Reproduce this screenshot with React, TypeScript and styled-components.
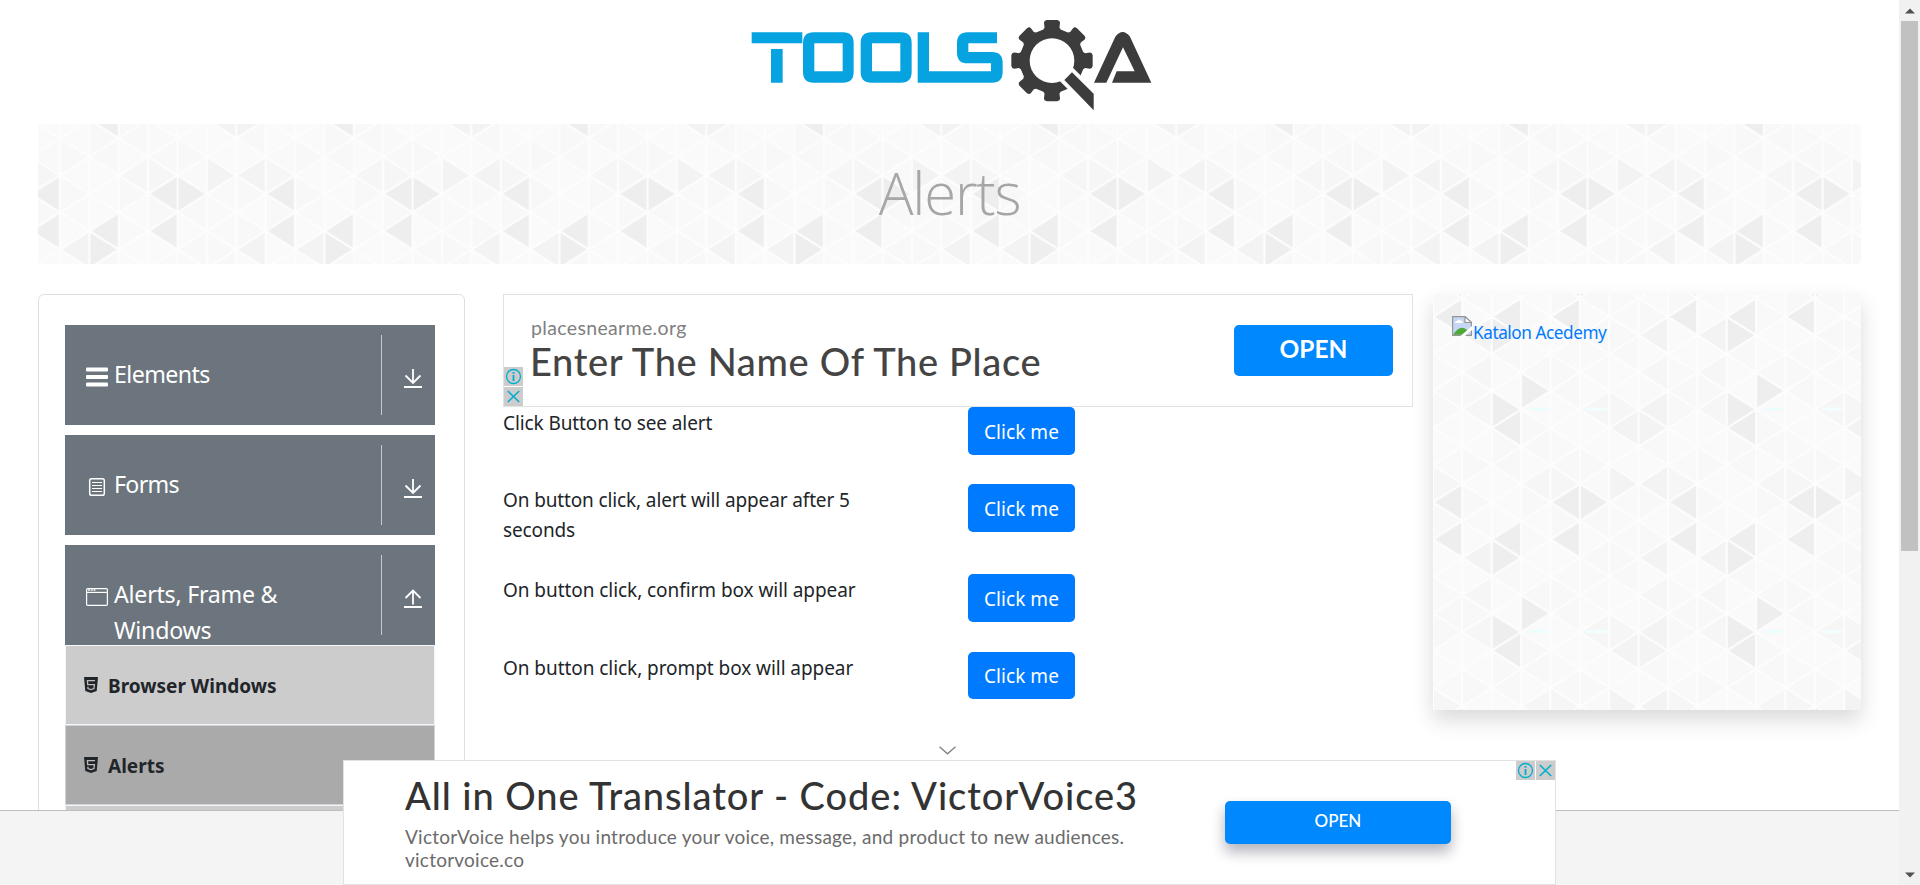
import React from 'react';
import styled, { createGlobalStyle, css } from 'styled-components';

const uiFont = '"Noto Sans", "Open Sans", sans-serif';
const adFont = 'Lato, Inter, sans-serif';

const GlobalStyle = createGlobalStyle`
  *, *::before, *::after { box-sizing: border-box; }
  body { margin: 0; background: #fff; overflow: hidden; }
  svg { display: block; }
`;

const Shell = styled.div`
  position: relative;
  display: flex;
  width: 1920px;
  height: 885px;
  overflow: hidden;
  font-family: ${uiFont};
  font-size: 19px;
  line-height: 30px;
  color: #212529;
`;

const Page = styled.div`
  display: flex;
  flex-direction: column;
  width: 1899px;
`;

const Scroller = styled.div`
  height: 810px;
  overflow: hidden;
  padding: 0 38px;
`;

const Footer = styled.footer`
  flex: 1;
  background: #f4f4f4;
  border-top: 1px solid #bdbdbd;
`;

const Header = styled.header`
  display: flex;
  justify-content: center;
  height: 124px;
`;

const Banner = styled.div`
  position: relative;
  display: flex;
  justify-content: center;
  height: 140px;
  padding-top: 25px;
`;

const BannerTitle = styled.h1`
  position: relative;
  margin: 0;
  font-family: "Open Sans", sans-serif;
  font-weight: 300;
  font-size: 58px;
  line-height: 88px;
  letter-spacing: -1.2px;
  color: #a6a6a6;
`;

const PatternSvg = styled.svg`
  position: absolute;
  inset: 0;
  width: 100%;
  height: 100%;
`;

const Columns = styled.div`
  display: flex;
  align-items: flex-start;
  margin-top: 30px;
`;

const SideCard = styled.nav`
  width: 427px;
  height: 620px;
  padding: 30px 29px 0 26px;
  border: 1px solid #dfdfdf;
  border-radius: 6px;
`;

const Group = styled.div`
  display: flex;
  width: 370px;
  height: 100px;
  margin-bottom: 10px;
  padding: 10px 0;
  background: #6c757d;
  color: #fff;
`;

const GroupLabel = styled.div`
  display: flex;
  gap: 6px;
  width: 317px;
  padding: 21px 0 0 21px;
  border-right: 1px solid #c4c8cb;
  font-size: 23.2px;
  line-height: 36px;
`;

const GroupIcon = styled.span`
  flex: none;
  width: 22px;
  padding-top: 11px;
`;

const GroupText = styled.span<{ $spacing?: number }>`
  width: 200px;
  letter-spacing: ${(p) => p.$spacing ?? 0}px;
`;

const GroupToggle = styled.span`
  padding: 34px 0 0 22px;
`;

const SubMenu = styled.ul`
  list-style: none;
  margin: -10px 0 0;
  padding: 0;
  width: 370px;
`;

const SubItem = styled.li<{ $active?: boolean }>`
  display: flex;
  align-items: center;
  gap: 10px;
  height: 80px;
  padding: 0 0 0 18px;
  border: 1px solid ${(p) => (p.$active ? '#ced4da' : '#f4f6f8')};
  background: ${(p) => (p.$active ? '#aaa' : '#ccc')};
  font-weight: 700;
`;

const SubLabel = styled.span`
  padding-top: 2px;
`;

const Main = styled.main`
  width: 910px;
  margin-left: 38px;
`;

const TopAd = styled.section`
  position: relative;
  display: flex;
  justify-content: space-between;
  height: 113px;
  padding: 30px 19px 0 27px;
  border: 1px solid #e2e2e2;
  font-family: ${adFont};
`;

const AdSite = styled.div`
  margin-top: -10px;
  font-size: 19.5px;
  line-height: 26px;
  letter-spacing: 0.35px;
  color: #808080;
`;

const AdTitle = styled.div`
  margin: -3px 0 0 -1px;
  font-size: 38px;
  line-height: 46px;
  font-weight: 500;
  letter-spacing: 0.67px;
  color: #444;
  white-space: nowrap;
`;

const AdButton = styled.button<{ $large?: boolean }>`
  display: flex;
  justify-content: center;
  border: 0;
  border-radius: 5px;
  background: #08f;
  color: #fff;
  font-family: ${adFont};
  ${(p) =>
    p.$large
      ? css`
          width: 159px;
          height: 51px;
          padding: 7px 0 0;
          font-size: 24.5px;
          line-height: 34px;
          font-weight: 700;
        `
      : css`
          width: 226px;
          height: 43px;
          padding: 8px 0 0;
          font-size: 17px;
          line-height: 24px;
          font-weight: 500;
          box-shadow: 0 8px 14px rgba(20, 20, 50, 0.32);
        `}
`;

const AdBadges = styled.div<{ $column?: boolean }>`
  position: absolute;
  display: flex;
  gap: 1px;
  ${(p) =>
    p.$column
      ? css`
          flex-direction: column;
          left: 0;
          bottom: 0;
        `
      : css`
          top: 0;
          right: 0;
        `}
`;

const Badge = styled.span`
  width: 19px;
  height: 19px;
  background: #ccc;
`;

const Rows = styled.div`
  display: flex;
  flex-direction: column;
  gap: 29.9px;
`;

const Row = styled.div`
  display: flex;
  align-items: flex-start;
`;

const RowLabel = styled.div<{ $spacing: number }>`
  width: 465px;
  margin: 1px 0 -1px;
  padding-right: 90px;
  letter-spacing: ${(p) => p.$spacing}px;
`;

const ClickButton = styled.button`
  width: 107px;
  height: 47.5px;
  padding: 1.6px 0 0;
  border: 0;
  border-radius: 5px;
  background: #007bff;
  color: #fff;
  font: 19px/30px ${uiFont};
  letter-spacing: 0.05px;
`;

const Promo = styled.aside`
  position: relative;
  width: 428px;
  height: 416px;
  margin-left: 20px;
  box-shadow: 0 10px 20px rgba(0, 0, 0, 0.15);
`;

const PromoLink = styled.a`
  position: relative;
  display: flex;
  gap: 1px;
  padding: 22px 0 0 19px;
  color: #007bff;
  font-size: 17.2px;
  line-height: 30px;
  letter-spacing: -0.45px;
`;

const PromoText = styled.span`
  padding-top: 2px;
`;

const BottomAd = styled.section`
  position: absolute;
  left: 343px;
  bottom: 0;
  display: flex;
  width: 1213px;
  height: 125px;
  padding: 9px 0 0 61px;
  border: 1px solid #e2e2e2;
  background: #fff;
  font-family: ${adFont};
`;

const BottomCopy = styled.div`
  width: 820px;
  white-space: nowrap;
`;

const BottomTitle = styled.div`
  margin-bottom: 5px;
  font-size: 38px;
  line-height: 50px;
  font-weight: 500;
  color: #333;
  letter-spacing: 0.94px;
`;

const BottomText = styled.div`
  font-size: 19px;
  line-height: 23px;
  color: #6b6b6b;
  letter-spacing: 0.24px;
`;

const BottomAction = styled.div`
  padding-top: 31px;
`;

const Collapse = styled.span`
  position: absolute;
  left: 939px;
  top: 746px;
`;

const ScrollTrack = styled.div`
  display: flex;
  flex-direction: column;
  align-items: center;
  justify-content: space-between;
  width: 21px;
  background: #f1f1f1;
`;

const ScrollThumb = styled.div`
  width: 17px;
  height: 530px;
  margin-bottom: auto;
  background: #c1c1c1;
`;

const ArrowCell = styled.div`
  display: flex;
  align-items: center;
  justify-content: center;
  width: 21px;
  height: 21px;
`;

const COL = 235 / 8;
const STEP = 222.6 / 12;
const DARK = ['0,1', '2,1', '4,1', '2,2', '3,5', '2,6', '2,7', '0,11', '4,11', '5,11'];
const MID = ['7,2', '1,2', '6,7', '7,7', '7,6', '6,10', '7,10'];
const SOFT = ['1,4', '7,4', '0,10', '3,10', '4,10', '6,6', '5,6', '1,6'];

const toneOf = (c: number, j: number) => {
  const key = `${c},${j}`;
  if (DARK.includes(key)) return '#eeeeee';
  if (MID.includes(key)) return '#f3f3f3';
  if (SOFT.includes(key)) return '#f6f6f6';
  return ['#f8f8f8', '#fafafa', '#f9f9f9', '#f8f8f8', '#fafafa'][(c * 7 + j * 3 + ((c * j) % 4)) % 5];
};

const Triangles = ({ id, x, y }: { id: string; x: number; y: number }) => {
  const shapes: React.ReactNode[] = [];
  for (let c = 0; c < 8; c++) {
    for (let j = -1; j <= 12; j++) {
      const cy = 4.25 + STEP * j;
      const left = (c + j + 12) % 2 === 1;
      const apex = (left ? c : c + 1) * COL;
      const side = (left ? c + 1 : c) * COL;
      shapes.push(
        <polygon
          key={`${c}.${j}`}
          points={`${apex},${cy} ${side},${cy - STEP} ${side},${cy + STEP}`}
          fill={toneOf(c, (j + 12) % 12)}
          stroke="#fdfdfd"
          strokeWidth="2"
        />,
      );
    }
  }
  return (
    <PatternSvg>
      <defs>
        <pattern id={id} width="235" height="222.6" patternUnits="userSpaceOnUse" x={x} y={y}>
          {shapes}
          <ellipse cx="106" cy="115" rx="10" ry="1.4" fill="#e8ffff" />
          <ellipse cx="164" cy="115" rx="12" ry="1.8" fill="#f2ffff" />
        </pattern>
      </defs>
      <rect width="100%" height="100%" fill={`url(#${id})`} />
    </PatternSvg>
  );
};

const gearPath = () => {
  const parts: string[] = [];
  for (let i = 0; i < 8; i++) {
    const a = (i * Math.PI) / 4 - Math.PI / 2;
    const at = (r: number, t: number) =>
      `${(966 + r * Math.cos(a + t)).toFixed(1)},${(182 + r * Math.sin(a + t)).toFixed(1)}`;
    parts.push(`${i ? 'L' : 'M'}${at(97, -0.27)} L${at(102, -0.22)} L${at(116, -0.21)} Q${at(123, -0.2)} ${at(123, -0.13)} L${at(123, 0.13)} Q${at(123, 0.2)} ${at(116, 0.21)} L${at(102, 0.22)} L${at(97, 0.27)}`);
  }
  return parts.join(' ') + ' Z';
};

const Logo = () => (
  <svg width="440" height="124" viewBox="0 0 1320 372">
    <g fill="#06a3e0" fillRule="evenodd">
      <path d="M65 97H217V130H65ZM123 147H158V248H123Z" />
      <path d="M251 97H339Q371 97 371 129V216Q371 248 339 248H251Q219 248 219 216V129Q219 97 251 97ZM253 130V214H338V130Z" />
      <path d="M424 97H513Q545 97 545 129V216Q545 248 513 248H424Q392 248 392 216V129Q392 97 424 97ZM426 130V214H511V130Z" />
      <path d="M801 97H713Q681 97 681 129V158Q681 190 713 190H783V214H597V97H563V248H786Q818 248 818 216V188Q818 156 786 156H715V130H801Z" />
    </g>
    <path d={gearPath()} fill="#3c3c3c" />
    <circle cx="966" cy="182" r="67" fill="#fff" />
    <path d="M1006 220L1070 284" stroke="#fff" strokeWidth="56" />
    <path d="M1003 240L1026 217L1091 281V331Z" fill="#3c3c3c" />
    <path d="M1092 248L1156 110Q1178 82 1200 110L1264 248H1146L1160 214H1214L1179 142L1129 248Z" fill="#3c3c3c" />
  </svg>
);

const MenuIcon = () => (
  <svg width="22" height="20" viewBox="0 0 22 20" fill="#fff">
    <rect y="0.5" width="22" height="4" rx="1" />
    <rect y="8" width="22" height="4" rx="1" />
    <rect y="15.5" width="22" height="4" rx="1" />
  </svg>
);

const FormIcon = () => (
  <svg width="22" height="20" viewBox="0 0 22 20" fill="none" stroke="#fff">
    <rect x="3.7" y="1.7" width="14.6" height="16.6" rx="1.8" strokeWidth="1.5" />
    <path d="M6 5.5H16M6 8.5H16M6 11.5H16M6 14.5H16" strokeWidth="1" />
  </svg>
);

const WindowIcon = () => (
  <svg width="22" height="20" viewBox="0 0 22 20" fill="none" stroke="#fff">
    <rect x="0.6" y="1.6" width="20.8" height="16.8" rx="1.2" strokeWidth="1.2" />
    <path d="M0.6 5.4H21.4" strokeWidth="1.2" />
    <path d="M2 3H10" strokeWidth="1.6" strokeDasharray="1.8 1" />
  </svg>
);

const ToggleArrow = ({ up }: { up?: boolean }) => (
  <svg width="18" height="19" viewBox="0 0 18 19" fill="none" stroke="#fff" strokeWidth="1.8">
    {up ? <path d="M9 15.5V1.5M1.5 9L9 1.5L16.5 9" /> : <path d="M9 0V14M1.5 6.5L9 14L16.5 6.5" />}
    <path d="M0 18H18" strokeWidth="2" />
  </svg>
);

const Html5Icon = () => (
  <svg width="14" height="16" viewBox="0 0 14 16">
    <path d="M0 0H14L12.7 14L7 16L1.3 14Z" fill="#212529" />
    <path d="M11 3.6H3.4L3.7 7.6H10.4L10 11.6L7 12.5L4 11.6L3.9 9.8" fill="none" stroke="#bbb" strokeWidth="1.3" />
  </svg>
);

const InfoBadge = () => (
  <Badge>
    <svg width="19" height="19" viewBox="0 0 19 19" fill="none" stroke="#00aecd">
      <circle cx="9.5" cy="9.5" r="7" strokeWidth="1.3" />
      <path d="M9.5 8V14M9.5 5V6.8" strokeWidth="1.8" />
    </svg>
  </Badge>
);

const CloseBadge = () => (
  <Badge>
    <svg width="19" height="19" viewBox="0 0 19 19" fill="none" stroke="#00aecd" strokeWidth="1.6">
      <path d="M3.8 4L15.2 15M15.2 4L3.8 15" />
    </svg>
  </Badge>
);

const BrokenImage = () => (
  <svg width="20" height="20" viewBox="0 0 20 20">
    <path d="M0.6 0.6H13L19.4 6.5V19.4H0.6Z" fill="#c6d7f5" stroke="#959595" strokeWidth="1.2" />
    <path d="M13 0.6V6.5H19.4Z" fill="#fff" stroke="#959595" strokeWidth="1.2" />
    <path d="M3 7Q3 5 5 5Q7 2 9 5Q11 5 11 7Z" fill="#fff" />
    <path d="M1.2 18.8Q8 8 15 14V18.8Z" fill="#4fa938" />
    <path d="M8.5 20L20 10V14L13 20Z" fill="#fff" />
  </svg>
);

const ScrollArrow = ({ down }: { down?: boolean }) => (
  <svg width="10" height="6" viewBox="0 0 10 6" fill="#505050">
    <path d={down ? 'M0 0.5H10L5 5.5Z' : 'M0 5.5H10L5 0.5Z'} />
  </svg>
);

const groups = [
  { label: 'Elements', icon: <MenuIcon />, spacing: -0.6 },
  { label: 'Forms', icon: <FormIcon />, spacing: -0.7 },
  { label: 'Alerts, Frame & Windows', icon: <WindowIcon />, spacing: -0.25, open: true },
];

const subItems = ['Browser Windows', 'Alerts', ''];

const rows = [
  { label: 'Click Button to see alert', spacing: -0.1 },
  { label: 'On button click, alert will appear after 5 seconds', spacing: -0.13 },
  { label: 'On button click, confirm box will appear', spacing: -0.06 },
  { label: 'On button click, prompt box will appear', spacing: -0.06 },
];

export default function App() {
  return (
    <>
      <GlobalStyle />
      <Shell>
        <Page>
          <Scroller>
            <Header>
              <Logo />
            </Header>
            <Banner>
              <Triangles id="banner-tile" x={-7.3} y={-138.3} />
              <BannerTitle>Alerts</BannerTitle>
            </Banner>
            <Columns>
              <SideCard>
                {groups.map((g) => (
                  <Group key={g.label}>
                    <GroupLabel>
                      <GroupIcon>{g.icon}</GroupIcon>
                      <GroupText $spacing={g.spacing}>{g.label}</GroupText>
                    </GroupLabel>
                    <GroupToggle>
                      <ToggleArrow up={g.open} />
                    </GroupToggle>
                  </Group>
                ))}
                <SubMenu>
                  {subItems.map((s, i) => (
                    <SubItem key={i} $active={s === 'Alerts'}>
                      {s && <Html5Icon />}
                      <SubLabel>{s}</SubLabel>
                    </SubItem>
                  ))}
                </SubMenu>
              </SideCard>
              <Main>
                <TopAd>
                  <div>
                    <AdSite>placesnearme.org</AdSite>
                    <AdTitle>Enter The Name Of The Place</AdTitle>
                  </div>
                  <AdButton $large>OPEN</AdButton>
                  <AdBadges $column>
                    <InfoBadge />
                    <CloseBadge />
                  </AdBadges>
                </TopAd>
                <Rows>
                  {rows.map((r) => (
                    <Row key={r.label}>
                      <RowLabel $spacing={r.spacing}>{r.label}</RowLabel>
                      <ClickButton>Click me</ClickButton>
                    </Row>
                  ))}
                </Rows>
              </Main>
              <Promo>
                <Triangles id="promo-tile" x={0} y={0} />
                <PromoLink>
                  <BrokenImage />
                  <PromoText>Katalon Acedemy</PromoText>
                </PromoLink>
              </Promo>
            </Columns>
          </Scroller>
          <Footer />
        </Page>
        <ScrollTrack>
          <ArrowCell>
            <ScrollArrow />
          </ArrowCell>
          <ScrollThumb />
          <ArrowCell>
            <ScrollArrow down />
          </ArrowCell>
        </ScrollTrack>
        <Collapse>
          <svg width="17" height="9" viewBox="0 0 17 9" fill="none" stroke="#808080" strokeWidth="1.3">
            <path d="M0.5 0.8L8.5 7.8L16.5 0.8" />
          </svg>
        </Collapse>
        <BottomAd>
          <BottomCopy>
            <BottomTitle>All in One Translator - Code: VictorVoice3</BottomTitle>
            <BottomText>
              VictorVoice helps you introduce your voice, message, and product to new audiences.
            </BottomText>
            <BottomText>victorvoice.co</BottomText>
          </BottomCopy>
          <BottomAction>
            <AdButton>OPEN</AdButton>
          </BottomAction>
          <AdBadges>
            <InfoBadge />
            <CloseBadge />
          </AdBadges>
        </BottomAd>
      </Shell>
    </>
  );
}
